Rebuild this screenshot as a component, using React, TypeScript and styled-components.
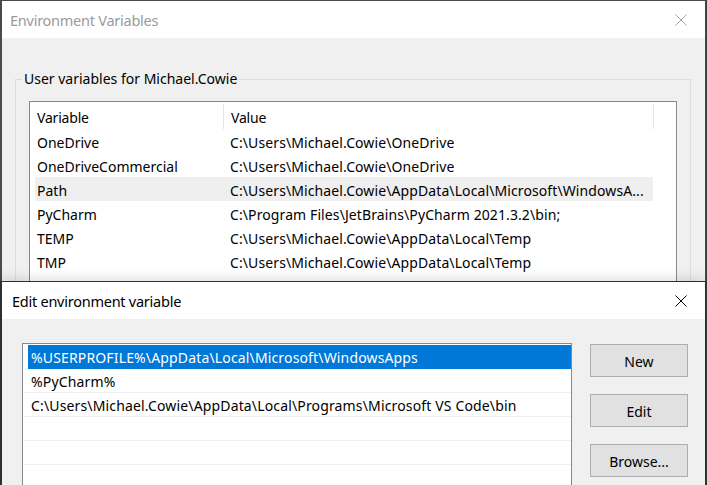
import styled, { createGlobalStyle } from "styled-components";

const GlobalStyle = createGlobalStyle`
  html, body {
    margin: 0;
    padding: 0;
    overflow: hidden;
  }
  body {
    font-family: "Segoe UI", "Noto Sans", "Open Sans", sans-serif;
    font-size: 14px;
    color: #000;
  }
`;

const Desktop = styled.div`
  position: relative;
  width: 707px;
  height: 485px;
  background: #3b3b3b;
  overflow: hidden;
`;

const Window = styled.div<{ $top: number; $active?: boolean }>`
  position: absolute;
  left: 0;
  top: ${(p) => p.$top}px;
  width: 706px;
  height: 520px;
  box-sizing: border-box;
  border: 1px solid ${(p) => (p.$active ? "#2f2f2f" : "#4a4a4a")};
  border-left-width: 2px;
  background: #f0f0f0;
  display: flex;
  flex-direction: column;
  box-shadow: ${(p) => (p.$active ? "0 -1px 12px rgba(0, 0, 0, 0.16)" : "none")};
`;

const TitleBar = styled.div`
  height: 37px;
  flex: none;
  background: #fff;
  display: flex;
  align-items: center;
  justify-content: space-between;
`;

const Title = styled.div<{ $active?: boolean }>`
  padding-left: ${(p) => (p.$active ? 10 : 8)}px;
  font-size: 14.5px;
  letter-spacing: -0.25px;
  color: ${(p) => (p.$active ? "#000" : "#9a9a9a")};
  white-space: nowrap;
`;

const CloseButton = styled.div`
  width: 46px;
  height: 37px;
  margin-right: 1px;
  display: flex;
  align-items: center;
  justify-content: center;
`;

const Body = styled.div`
  flex: 1;
  display: flex;
  flex-direction: column;
`;

const GroupBox = styled.fieldset`
  margin: 32px 14px 0 13px;
  padding: 13px 13px 0 13px;
  border: 1px solid #dcdcdc;
  height: 220px;
`;

const GroupLabel = styled.legend`
  padding: 0 2px;
  margin-left: -7px;
  line-height: 18px;
`;

const ListView = styled.div`
  background: #fff;
  border: 1px solid #828790;
  height: 200px;
  display: flex;
  flex-direction: column;
`;

const HeaderRow = styled.div`
  height: 27px;
  display: flex;
  align-items: stretch;
  flex: none;
`;

const HeaderCell = styled.div<{ $width?: number }>`
  width: ${(p) => (p.$width ? `${p.$width}px` : "auto")};
  flex: ${(p) => (p.$width ? "none" : "1")};
  box-sizing: border-box;
  padding: 2px 0 0 7px;
  margin: 2px 0 0;
  border-right: 1px solid #e5e5e5;
  display: flex;
  align-items: center;
  letter-spacing: -0.2px;
  &:last-child {
    border-right: none;
  }
`;

const Rows = styled.div`
  padding-left: 5px;
  display: flex;
  flex-direction: column;
`;

const VarRow = styled.div<{ $selected?: boolean }>`
  height: 24px;
  width: 618px;
  box-sizing: border-box;
  padding-top: 2px;
  display: flex;
  align-items: center;
  background: ${(p) => (p.$selected ? "#efefef" : "transparent")};
`;

const VarCell = styled.div<{ $width: number; $pad: number; $spacing: number }>`
  width: ${(p) => p.$width}px;
  flex: none;
  box-sizing: border-box;
  padding-left: ${(p) => p.$pad}px;
  letter-spacing: ${(p) => p.$spacing}px;
  white-space: nowrap;
  overflow: hidden;
  text-overflow: ellipsis;
`;

const EditBody = styled.div`
  flex: 1;
  display: flex;
  gap: 18px;
  padding: 24px 0 0 20px;
`;

const PathList = styled.div`
  width: 550px;
  height: 200px;
  box-sizing: border-box;
  background: #fff;
  border: 1px solid #828790;
  padding: 1px 0 0 1px;
  display: flex;
  flex-direction: column;
`;

const PathRow = styled.div<{ $selected?: boolean }>`
  height: 24px;
  flex: none;
  box-sizing: border-box;
  margin-left: ${(p) => (p.$selected ? 4 : 0)}px;
  padding: 2px 0 0 ${(p) => (p.$selected ? 3 : 7)}px;
  display: flex;
  align-items: center;
  white-space: nowrap;
  letter-spacing: 0.15px;
  background: ${(p) => (p.$selected ? "#0078d7" : "#fff")};
  color: ${(p) => (p.$selected ? "#fff" : "#000")};
  border-bottom: 1px solid ${(p) => (p.$selected ? "#0078d7" : "#f0f0f0")};
`;

const ButtonColumn = styled.div`
  display: flex;
  flex-direction: column;
  gap: 17px;
  padding-top: 1px;
`;

const Button = styled.button`
  width: 98px;
  height: 33px;
  box-sizing: border-box;
  border: 1px solid #adadad;
  background: #e1e1e1;
  font-family: inherit;
  font-size: 14px;
  color: #000;
  padding: 1px 0 0;
`;

function CloseIcon({ color }: { color: string }) {
  return (
    <svg width="12" height="12" viewBox="0 0 12 12">
      <path d="M0.5 0.5 L11.5 11.5 M11.5 0.5 L0.5 11.5" stroke={color} strokeWidth="1" fill="none" />
    </svg>
  );
}

const userVars = [
  ["OneDrive", "C:\\Users\\Michael.Cowie\\OneDrive"],
  ["OneDriveCommercial", "C:\\Users\\Michael.Cowie\\OneDrive"],
  ["Path", "C:\\Users\\Michael.Cowie\\AppData\\Local\\Microsoft\\WindowsA..."],
  ["PyCharm", "C:\\Program Files\\JetBrains\\PyCharm 2021.3.2\\bin;"],
  ["TEMP", "C:\\Users\\Michael.Cowie\\AppData\\Local\\Temp"],
  ["TMP", "C:\\Users\\Michael.Cowie\\AppData\\Local\\Temp"],
];

const pathEntries = [
  "%USERPROFILE%\\AppData\\Local\\Microsoft\\WindowsApps",
  "%PyCharm%",
  "C:\\Users\\Michael.Cowie\\AppData\\Local\\Programs\\Microsoft VS Code\\bin",
  "",
  "",
  "",
];

export default function App() {
  return (
    <>
      <GlobalStyle />
      <Desktop>
        <Window $top={0}>
          <TitleBar>
            <Title>Environment Variables</Title>
            <CloseButton>
              <CloseIcon color="#a6a6a6" />
            </CloseButton>
          </TitleBar>
          <Body>
            <GroupBox>
              <GroupLabel>User variables for Michael.Cowie</GroupLabel>
              <ListView>
                <HeaderRow>
                  <HeaderCell $width={194}>Variable</HeaderCell>
                  <HeaderCell $width={430}>Value</HeaderCell>
                  <HeaderCell />
                </HeaderRow>
                <Rows>
                  {userVars.map(([name, value]) => (
                    <VarRow key={name} $selected={name === "Path"}>
                      <VarCell $width={188} $pad={2} $spacing={0}>
                        {name}
                      </VarCell>
                      <VarCell $width={430} $pad={7} $spacing={0.1}>
                        {value}
                      </VarCell>
                    </VarRow>
                  ))}
                </Rows>
              </ListView>
            </GroupBox>
          </Body>
        </Window>

        <Window $top={281} $active>
          <TitleBar>
            <Title $active>Edit environment variable</Title>
            <CloseButton>
              <CloseIcon color="#000" />
            </CloseButton>
          </TitleBar>
          <EditBody>
            <PathList>
              {pathEntries.map((entry, i) => (
                <PathRow key={i} $selected={i === 0}>
                  {entry}
                </PathRow>
              ))}
            </PathList>
            <ButtonColumn>
              <Button>New</Button>
              <Button>Edit</Button>
              <Button>Browse...</Button>
            </ButtonColumn>
          </EditBody>
        </Window>
      </Desktop>
    </>
  );
}
